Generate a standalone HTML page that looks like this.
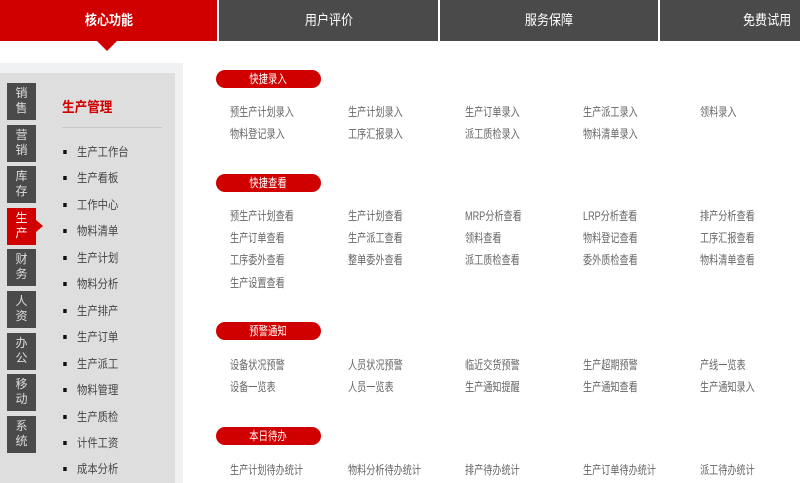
<!DOCTYPE html><html><head><meta charset="utf-8"><style>
*{margin:0;padding:0;box-sizing:border-box}
body{width:800px;height:483px;overflow:hidden;background:#fff;font-family:"Liberation Sans","Noto Sans CJK SC",sans-serif;position:relative}
.tab{position:absolute;top:0;height:41px;background:#4a4a4a;color:#fff;font-size:14px;text-align:center;line-height:40px}
.tab span{display:inline-block;transform:scaleX(0.86)}
.tab.on{background:#d10000;font-weight:bold}
.a{position:absolute}
.vt{position:absolute;left:7px;width:29px;height:37px;background:#4a4a4a;color:#ddd;font-size:12px;line-height:15px;text-align:center;padding-top:3px}
.vt.on{background:#d10000;color:#fff}
.li{position:absolute;left:77px;font-size:12px;color:#444;line-height:14px;transform:scaleX(0.86);transform-origin:left}
.li:before{content:"";position:absolute;left:-16px;top:5px;width:4px;height:4px;background:#111}
.pill{position:absolute;left:216px;width:105px;height:18px;border-radius:9px;background:#d10000;color:#fff;font-size:12px;text-align:center;line-height:18px}
.pill span{display:inline-block;transform:scaleX(0.78)}
.it{position:absolute;font-size:12px;color:#666;line-height:14px;white-space:nowrap;transform:scaleX(0.76);transform-origin:left}
</style></head><body>
<div class="tab on" style="left:0;width:217px"><span>核心功能</span></div>
<div class="tab" style="left:219px;width:219px"><span>用户评价</span></div>
<div class="tab" style="left:440px;width:218px"><span>服务保障</span></div>
<div class="tab" style="left:660px;width:140px;padding-left:83px;text-align:left"><span style="transform-origin:left">免费试用</span></div>
<div class="a" style="left:97px;top:41px;width:0;height:0;border-left:10px solid transparent;border-right:10px solid transparent;border-top:10px solid #d10000"></div>
<div class="a" style="left:0;top:63px;width:183px;height:420px;background:#f0f1f3"></div>
<div class="a" style="left:0;top:73px;width:175px;height:410px;background:#dedede"></div>
<div class="vt" style="top:83px">销<br>售</div>
<div class="vt" style="top:125px">营<br>销</div>
<div class="vt" style="top:166px">库<br>存</div>
<div class="vt on" style="top:208px">生<br>产</div>
<div class="a" style="left:36px;top:220px;border-top:6px solid transparent;border-bottom:6px solid transparent;border-left:7px solid #d10000"></div>
<div class="vt" style="top:249px">财<br>务</div>
<div class="vt" style="top:291px">人<br>资</div>
<div class="vt" style="top:333px">办<br>公</div>
<div class="vt" style="top:374px">移<br>动</div>
<div class="vt" style="top:416px">系<br>统</div>
<div class="a" style="left:62px;top:97px;font-size:14px;font-weight:bold;color:#d10000;transform:scaleX(0.9);transform-origin:left">生产管理</div>
<div class="a" style="left:62px;top:127px;width:100px;height:1px;background:#c8c8c8"></div>
<div class="li" style="top:145px">生产工作台</div>
<div class="li" style="top:171px">生产看板</div>
<div class="li" style="top:198px">工作中心</div>
<div class="li" style="top:224px">物料清单</div>
<div class="li" style="top:251px">生产计划</div>
<div class="li" style="top:277px">物料分析</div>
<div class="li" style="top:304px">生产排产</div>
<div class="li" style="top:330px">生产订单</div>
<div class="li" style="top:357px">生产派工</div>
<div class="li" style="top:383px">物料管理</div>
<div class="li" style="top:410px">生产质检</div>
<div class="li" style="top:436px">计件工资</div>
<div class="li" style="top:462px">成本分析</div>
<div class="pill" style="top:70px"><span>快捷录入</span></div>
<div class="pill" style="top:174px"><span>快捷查看</span></div>
<div class="pill" style="top:322px"><span>预警通知</span></div>
<div class="pill" style="top:427px"><span>本日待办</span></div>
<div class="it" style="left:230px;top:105px">预生产计划录入</div><div class="it" style="left:348px;top:105px">生产计划录入</div><div class="it" style="left:465px;top:105px">生产订单录入</div><div class="it" style="left:583px;top:105px">生产派工录入</div><div class="it" style="left:700px;top:105px">领料录入</div>
<div class="it" style="left:230px;top:127px">物料登记录入</div><div class="it" style="left:348px;top:127px">工序汇报录入</div><div class="it" style="left:465px;top:127px">派工质检录入</div><div class="it" style="left:583px;top:127px">物料清单录入</div>
<div class="it" style="left:230px;top:209px">预生产计划查看</div><div class="it" style="left:348px;top:209px">生产计划查看</div><div class="it" style="left:465px;top:209px">MRP分析查看</div><div class="it" style="left:583px;top:209px">LRP分析查看</div><div class="it" style="left:700px;top:209px">排产分析查看</div>
<div class="it" style="left:230px;top:231px">生产订单查看</div><div class="it" style="left:348px;top:231px">生产派工查看</div><div class="it" style="left:465px;top:231px">领料查看</div><div class="it" style="left:583px;top:231px">物料登记查看</div><div class="it" style="left:700px;top:231px">工序汇报查看</div>
<div class="it" style="left:230px;top:253px">工序委外查看</div><div class="it" style="left:348px;top:253px">整单委外查看</div><div class="it" style="left:465px;top:253px">派工质检查看</div><div class="it" style="left:583px;top:253px">委外质检查看</div><div class="it" style="left:700px;top:253px">物料清单查看</div>
<div class="it" style="left:230px;top:276px">生产设置查看</div>
<div class="it" style="left:230px;top:358px">设备状况预警</div><div class="it" style="left:348px;top:358px">人员状况预警</div><div class="it" style="left:465px;top:358px">临近交货预警</div><div class="it" style="left:583px;top:358px">生产超期预警</div><div class="it" style="left:700px;top:358px">产线一览表</div>
<div class="it" style="left:230px;top:380px">设备一览表</div><div class="it" style="left:348px;top:380px">人员一览表</div><div class="it" style="left:465px;top:380px">生产通知提醒</div><div class="it" style="left:583px;top:380px">生产通知查看</div><div class="it" style="left:700px;top:380px">生产通知录入</div>
<div class="it" style="left:230px;top:463px">生产计划待办统计</div><div class="it" style="left:348px;top:463px">物料分析待办统计</div><div class="it" style="left:465px;top:463px">排产待办统计</div><div class="it" style="left:583px;top:463px">生产订单待办统计</div><div class="it" style="left:700px;top:463px">派工待办统计</div>
</body></html>
